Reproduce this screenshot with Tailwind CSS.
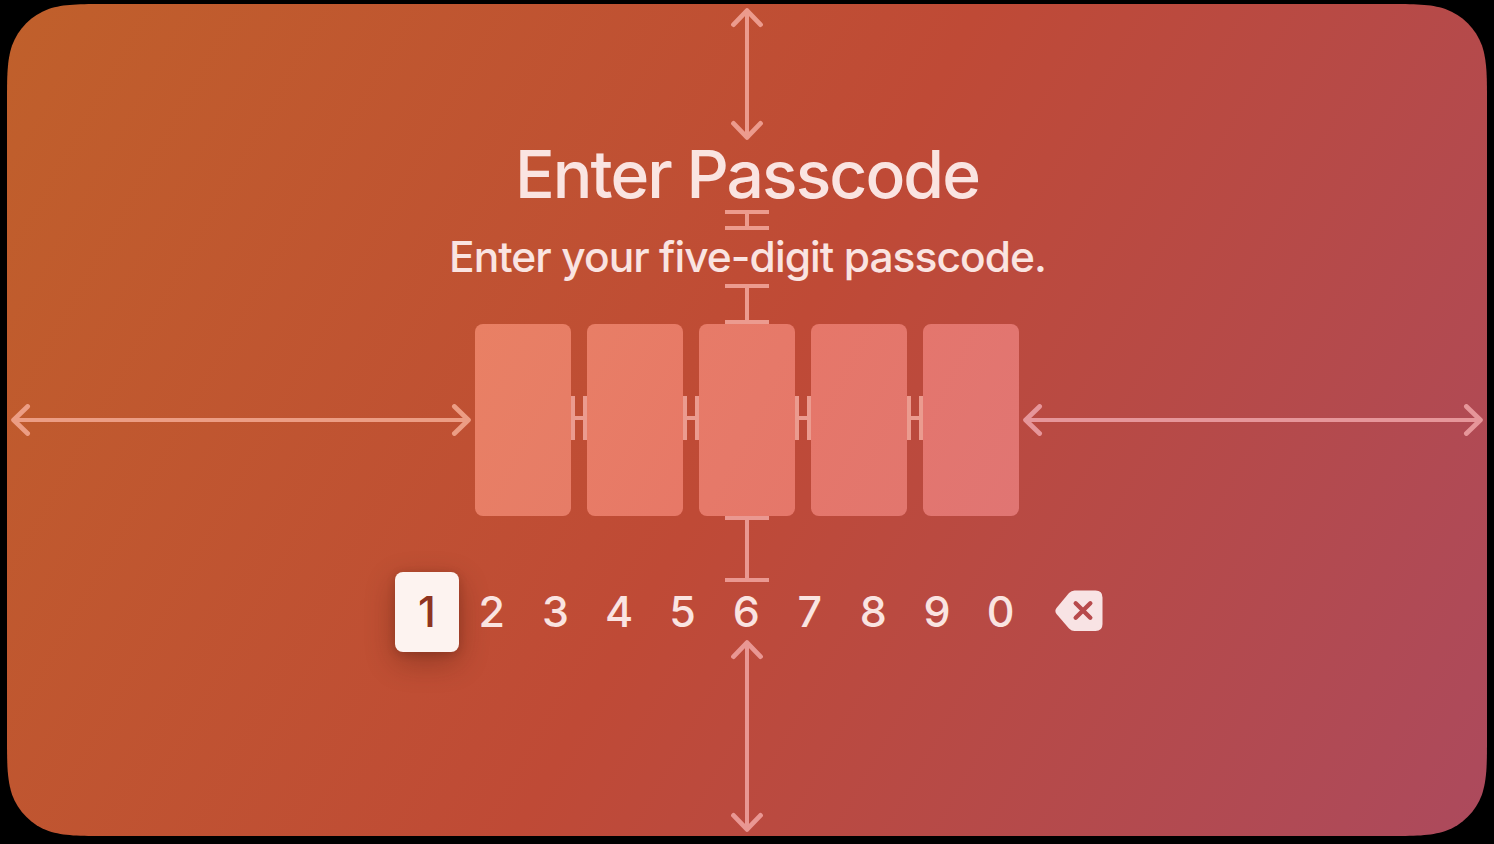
<!DOCTYPE html>
<html lang="en">
<head>
<meta charset="utf-8">
<title>Enter Passcode</title>
<script src="https://cdn.jsdelivr.net/npm/@tailwindcss/browser@4"></script>
</head>
<body class="bg-black w-[1494px] h-[844px] overflow-hidden font-['Inter',sans-serif] font-medium">
<svg width="0" height="0" class="absolute"><defs>
<g id="head" fill="none" stroke="currentColor" stroke-width="4.8" stroke-linecap="round" stroke-linejoin="round"><path d="M2.500 16.600L16 2.600L29.500 16.600"/></g>
</defs></svg>
<main class="ml-[7px] mt-[4px] w-[1480px] h-[832px] flex flex-col items-center text-[#fae4e1] bg-[linear-gradient(119.3deg,#c0602b_0%,#bf4a36_50%,#ac4a5d_100%)] [clip-path:path('M0_100.8C0_71.8_0_57.3_5_41.6C11.2_24.6_24.6_11.2_41.6_5C57.3_0_71.8_0_100.8_0H1379.2C1408.2_0_1422.7_0_1438.4_5C1455.4_11.2_1468.8_24.6_1475_41.6C1480_57.3_1480_71.8_1480_100.8V731.2C1480_760.2_1480_774.7_1475_790.4C1468.8_807.4_1455.4_820.8_1438.4_827C1422.7_832_1408.2_832_1379.2_832H100.8C71.8_832_57.3_832_41.6_827C24.6_820.8_11.2_807.4_5_790.4C0_774.7_0_760.2_0_731.2Z')]">
  <svg class="mt-1 h-[132px] w-8 shrink-0 text-[#ec9b8d]" viewBox="0 0 32 132"><g><use href="#head"/><use href="#head" transform="translate(0 132) scale(1 -1)"/><path d="M16 3V129" stroke="currentColor" stroke-width="4"/></g></svg>
  <h1 class="h-[70px] leading-[68px] text-[66px] tracking-[-1.95px] whitespace-nowrap shrink-0">Enter Passcode</h1>
  <svg class="h-5 w-11 shrink-0 text-[#ec9b8d]" viewBox="0 0 44 20"><path d="M0 2H44M0 18H44M22 2V18" stroke="currentColor" stroke-width="4"/></svg>
  <p class="h-[54px] ml-px leading-[54px] text-[42.5px] tracking-[-0.95px] whitespace-nowrap shrink-0">Enter your five-digit passcode.</p>
  <svg class="h-10 w-11 shrink-0 text-[#ec9b8f]" viewBox="0 0 44 40"><path d="M0 2H44M0 38H44M22 2V38" stroke="currentColor" stroke-width="4"/></svg>
  <section class="flex h-48 w-full items-center shrink-0 px-1">
    <svg class="h-8 w-[460px] shrink-0 text-[#ec9d84]" viewBox="0 0 460 32"><use href="#head" transform="matrix(0 1 1 0 0 0)"/><use href="#head" transform="matrix(0 1 -1 0 460 0)"/><path d="M3 16H457" stroke="currentColor" stroke-width="4"/></svg>
    <div class="mx-1 flex h-48 items-center text-[#eb9b8f]">
      <div class="h-48 w-24 rounded-lg bg-linear-to-br from-[#e98064] to-[#e67c67]"></div>
      <svg class="w-4 h-11 -mt-1" viewBox="0 0 16 44"><path d="M2 0V44M14 0V44M2 22H14" stroke="currentColor" stroke-width="4"/></svg>
      <div class="h-48 w-24 rounded-lg bg-linear-to-br from-[#e87e66] to-[#e77867]"></div>
      <svg class="w-4 h-11 -mt-1" viewBox="0 0 16 44"><path d="M2 0V44M14 0V44M2 22H14" stroke="currentColor" stroke-width="4"/></svg>
      <div class="h-48 w-24 rounded-lg bg-linear-to-br from-[#e77b68] to-[#e5776a]"></div>
      <svg class="w-4 h-11 -mt-1" viewBox="0 0 16 44"><path d="M2 0V44M14 0V44M2 22H14" stroke="currentColor" stroke-width="4"/></svg>
      <div class="h-48 w-24 rounded-lg bg-linear-to-br from-[#e67769] to-[#e2766e]"></div>
      <svg class="w-4 h-11 -mt-1" viewBox="0 0 16 44"><path d="M2 0V44M14 0V44M2 22H14" stroke="currentColor" stroke-width="4"/></svg>
      <div class="h-48 w-24 rounded-lg bg-linear-to-br from-[#e4766d] to-[#e07573]"></div>
    </div>
    <svg class="h-8 w-[460px] shrink-0 text-[#e6969a]" viewBox="0 0 460 32"><use href="#head" transform="matrix(0 1 1 0 0 0)"/><use href="#head" transform="matrix(0 1 -1 0 460 0)"/><path d="M3 16H457" stroke="currentColor" stroke-width="4"/></svg>
  </section>
  <div class="flex flex-col items-center shrink-0 h-[124px]">
    <svg class="h-[66px] w-11 shrink-0 text-[#ea9891]" viewBox="0 0 44 66"><path d="M0 2H44M0 64H44M22 2V64" stroke="currentColor" stroke-width="4"/></svg>
    <div class="-mt-[10px] ml-[4px] flex h-20 shrink-0 items-center text-[43px] leading-[78px] text-center">
      <span class="w-16 h-20 mr-px rounded-lg bg-[#fdf3f0] text-[#8f3421] shadow-[0_10px_30px_rgba(60,20,10,0.33),0_2px_8px_rgba(60,20,10,0.2)]">1</span>
      <span class="w-[63.6px] h-20">2</span><span class="w-[63.6px] h-20">3</span><span class="w-[63.6px] h-20">4</span><span class="w-[63.6px] h-20">5</span><span class="w-[63.6px] h-20">6</span><span class="w-[63.6px] h-20">7</span><span class="w-[63.6px] h-20">8</span><span class="w-[63.6px] h-20">9</span><span class="w-[63.6px] h-20">0</span>
      <svg class="ml-[22.6px] w-12 h-[42px] -mt-[3px] text-[#f8e3e4]" viewBox="0 0 48 42"><path fill="currentColor" d="M19.500 .5H40.500Q47.500 .5 47.500 7.500V34Q47.500 41 40.500 41H19.500Q16.500 41 14 38.500L1.500 24Q-.8 21 1.500 18L14 3Q16.500 .5 19.500 .5Z"/><path d="M20.700 13.300L35.300 27.700M35.300 13.300L20.700 27.700" stroke="#b74a4c" stroke-width="4.4" stroke-linecap="round"/></svg>
    </div>
  </div>
  <svg class="h-[192px] w-8 shrink-0 text-[#e99793]" viewBox="0 0 32 192"><use href="#head"/><use href="#head" transform="translate(0 192) scale(1 -1)"/><path d="M16 3V189" stroke="currentColor" stroke-width="4"/></svg>
</main>
</body>
</html>
